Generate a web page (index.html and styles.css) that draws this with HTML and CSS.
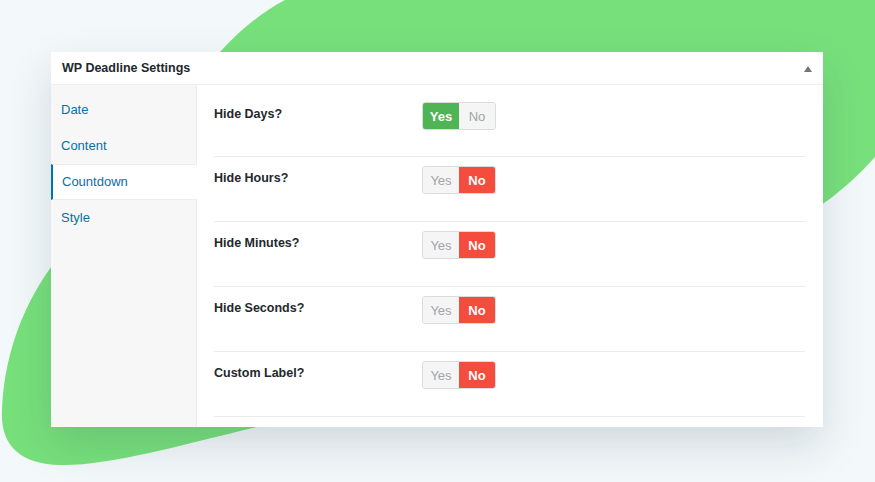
FILE: index.html
```html
<!DOCTYPE html>
<html lang="en">
<head>
    <meta charset="UTF-8">
    <meta name="viewport" content="width=device-width, initial-scale=1.0">
    <title>WP Deadline Settings</title>
    <link rel="stylesheet" href="styles.css">
</head>
<body>
    <svg class="blob" width="875" height="482" viewBox="0 0 875 482">
        <path d="M285,0 L875,0 L875,157 C858,176 840,192 824,203 L600,330 C480,390 360,415 257,427 C180,445 110,466 60,465 C20,464 0,445 2,410 C4,360 20,310 51,267 C100,190 170,110 220,52 C240,30 262,12 285,0 Z" fill="#77e07b"/>
    </svg>

    <div class="stage">
        <div class="panel">
            <div class="panel-header">
                <span class="panel-title">WP Deadline Settings</span>
                <span class="toggle-arrow"></span>
            </div>

            <div class="panel-body">
                <ul class="tabs">
                    <li class="tab">Date</li>
                    <li class="tab">Content</li>
                    <li class="tab active">Countdown</li>
                    <li class="tab">Style</li>
                </ul>

                <div class="fields">
                    <div class="field-row">
                        <label class="field-label">Hide Days?</label>
                        <div class="switch">
                            <span class="opt yes on">Yes</span>
                            <span class="opt no">No</span>
                        </div>
                    </div>
                    <div class="field-row">
                        <label class="field-label">Hide Hours?</label>
                        <div class="switch">
                            <span class="opt yes">Yes</span>
                            <span class="opt no on">No</span>
                        </div>
                    </div>
                    <div class="field-row">
                        <label class="field-label">Hide Minutes?</label>
                        <div class="switch">
                            <span class="opt yes">Yes</span>
                            <span class="opt no on">No</span>
                        </div>
                    </div>
                    <div class="field-row">
                        <label class="field-label">Hide Seconds?</label>
                        <div class="switch">
                            <span class="opt yes">Yes</span>
                            <span class="opt no on">No</span>
                        </div>
                    </div>
                    <div class="field-row">
                        <label class="field-label">Custom Label?</label>
                        <div class="switch">
                            <span class="opt yes">Yes</span>
                            <span class="opt no on">No</span>
                        </div>
                    </div>
                </div>
            </div>
        </div>
    </div>
</body>
</html>
```

FILE: styles.css
```css
body {
    margin: 0;
    width: 875px;
    height: 482px;
    overflow: hidden;
    position: relative;
    background-color: #f3f8fa;
    font-family: "Liberation Sans", Arial, sans-serif;
    color: #23282d;
}
.blob {
    position: absolute;
    left: 0;
    top: 0;
}
.stage {
    position: relative;
    padding: 52px 0 0 51px;
}
.panel {
    width: 772px;
    height: 375px;
    background: white;
    box-shadow: 0 18px 40px rgba(40, 60, 80, 0.16);
    display: flex;
    flex-direction: column;
}
.panel-header {
    height: 32px;
    flex: none;
    display: flex;
    align-items: center;
    justify-content: space-between;
    padding: 0 11px;
    border-bottom: 1px solid #eeeeee;
}
.panel-title {
    font-size: 12.5px;
    font-weight: bold;
}
.toggle-arrow {
    width: 0;
    height: 0;
    border-left: 4px solid transparent;
    border-right: 4px solid transparent;
    border-bottom: 6px solid #72777c;
    margin-right: 0;
    margin-top: 2px;
}
.panel-body {
    flex: 1;
    display: flex;
}
.tabs {
    list-style: none;
    margin: 0;
    padding: 7px 0 0;
    width: 145px;
    flex: none;
    background: #f7f7f7;
    border-right: 1px solid #ececec;
}
.tab {
    box-sizing: border-box;
    height: 36px;
    line-height: 34px;
    padding-left: 10px;
    font-size: 13px;
    color: #0073aa;
    border-top: 1px solid transparent;
    border-bottom: 1px solid transparent;
}
.tab.active {
    background: white;
    border-left: 2px solid #0073aa;
    border-top-color: #ececec;
    border-bottom-color: #ececec;
    padding-left: 9px;
    margin-right: -1px;
}
.fields {
    flex: 1;
    padding: 8px 18px 0 17px;
}
.field-row {
    height: 64px;
    display: flex;
    align-items: flex-start;
    padding-top: 9px;
    box-sizing: border-box;
    border-bottom: 1px solid #ebebeb;
}
.field-row + .field-row {
    height: 65px;
}
.field-label {
    width: 208px;
    flex: none;
    font-size: 12.5px;
    font-weight: bold;
    line-height: 25px;
}
.switch {
    display: flex;
    height: 28px;
    border: 1px solid #dcdcdc;
    border-radius: 3px;
    overflow: hidden;
    box-sizing: border-box;
}
.opt {
    width: 36px;
    display: flex;
    align-items: center;
    justify-content: center;
    font-size: 13px;
    color: #a0a5aa;
    background: #f5f5f5;
}
.opt.yes.on {
    background: #4fb454;
    color: white;
    font-weight: bold;
}
.opt.no.on {
    background: #f44c3d;
    color: white;
    font-weight: bold;
}
```
